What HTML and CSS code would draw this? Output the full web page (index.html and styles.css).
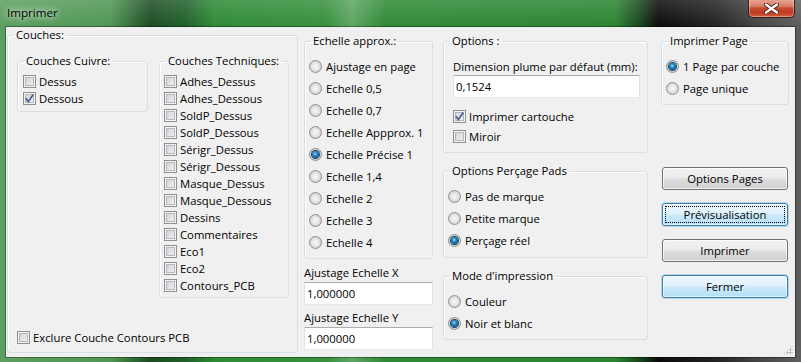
FILE: index.html
```html
<!DOCTYPE html>
<html>
<head>
    <title>Imprimer</title>
    <link rel="stylesheet" href="styles.css">
</head>
<body>
    <div class="window">
        <div class="titlebar">
            <span class="caption">Imprimer</span>
            <div class="close-btn">
                <svg width="15" height="11" viewBox="0 0 15 11">
                    <path d="M2 1.5 L13 9.5 M13 1.5 L2 9.5" stroke="#4a2018" stroke-width="4.2" stroke-linecap="round"/>
                    <path d="M2 1.5 L13 9.5 M13 1.5 L2 9.5" stroke="#ffffff" stroke-width="2.4" stroke-linecap="round"/>
                </svg>
            </div>
        </div>

        <div class="client">
            <!-- Couches -->
            <fieldset class="group couches">
                <legend>Couches:</legend>
                <div class="couches-body">
                    <div class="couches-row">
                        <fieldset class="group cuivre">
                            <legend>Couches Cuivre:</legend>
                            <div class="list">
                                <label class="check"><span class="box"></span>Dessus</label>
                                <label class="check"><span class="box on"><svg width="11" height="11" viewBox="0 0 11 11"><path d="M1.8 5.3 L4.3 8.6 L9.3 1.6" fill="none" stroke="#4a5f97" stroke-width="1.7"/></svg></span>Dessous</label>
                            </div>
                        </fieldset>
                        <fieldset class="group techniques">
                            <legend>Couches Techniques:</legend>
                            <div class="list">
                                <label class="check"><span class="box"></span>Adhes_Dessus</label>
                                <label class="check"><span class="box"></span>Adhes_Dessous</label>
                                <label class="check"><span class="box"></span>SoldP_Dessus</label>
                                <label class="check"><span class="box"></span>SoldP_Dessous</label>
                                <label class="check"><span class="box"></span>Sérigr_Dessus</label>
                                <label class="check"><span class="box"></span>Sérigr_Dessous</label>
                                <label class="check"><span class="box"></span>Masque_Dessus</label>
                                <label class="check"><span class="box"></span>Masque_Dessous</label>
                                <label class="check"><span class="box"></span>Dessins</label>
                                <label class="check"><span class="box"></span>Commentaires</label>
                                <label class="check"><span class="box"></span>Eco1</label>
                                <label class="check"><span class="box"></span>Eco2</label>
                                <label class="check"><span class="box"></span>Contours_PCB</label>
                            </div>
                        </fieldset>
                    </div>
                    <label class="check exclure"><span class="box"></span>Exclure Couche Contours PCB</label>
                </div>
            </fieldset>

            <!-- Echelle -->
            <div class="col col-echelle">
                <fieldset class="group echelle">
                    <legend>Echelle approx.:</legend>
                    <div class="radios">
                        <label class="radio-row"><span class="radio"></span>Ajustage en page</label>
                        <label class="radio-row"><span class="radio"></span>Echelle 0,5</label>
                        <label class="radio-row"><span class="radio"></span>Echelle 0,7</label>
                        <label class="radio-row"><span class="radio"></span>Echelle Appprox. 1</label>
                        <label class="radio-row"><span class="radio on"></span>Echelle Précise 1</label>
                        <label class="radio-row"><span class="radio"></span>Echelle 1,4</label>
                        <label class="radio-row"><span class="radio"></span>Echelle 2</label>
                        <label class="radio-row"><span class="radio"></span>Echelle 3</label>
                        <label class="radio-row"><span class="radio"></span>Echelle 4</label>
                    </div>
                </fieldset>
                <div class="field-label first">Ajustage Echelle X</div>
                <input class="textbox scale" type="text" value="1,000000">
                <div class="field-label">Ajustage Echelle Y</div>
                <input class="textbox scale" type="text" value="1,000000">
            </div>

            <!-- Options -->
            <div class="col col-options">
                <fieldset class="group options">
                    <legend>Options :</legend>
                    <div class="options-body">
                        <div class="field-label">Dimension plume par défaut (mm):</div>
                        <input class="textbox pen" type="text" value="0,1524">
                        <label class="check tall first"><span class="box on"><svg width="11" height="11" viewBox="0 0 11 11"><path d="M1.8 5.3 L4.3 8.6 L9.3 1.6" fill="none" stroke="#4a5f97" stroke-width="1.7"/></svg></span>Imprimer cartouche</label>
                        <label class="check tall"><span class="box"></span>Miroir</label>
                    </div>
                </fieldset>
                <fieldset class="group percage">
                    <legend>Options Perçage Pads</legend>
                    <div class="radios">
                        <label class="radio-row"><span class="radio"></span>Pas de marque</label>
                        <label class="radio-row"><span class="radio"></span>Petite marque</label>
                        <label class="radio-row"><span class="radio on"></span>Perçage réel</label>
                    </div>
                </fieldset>
                <fieldset class="group mode">
                    <legend>Mode d'impression</legend>
                    <div class="radios">
                        <label class="radio-row"><span class="radio"></span>Couleur</label>
                        <label class="radio-row"><span class="radio on"></span>Noir et blanc</label>
                    </div>
                </fieldset>
            </div>

            <!-- Page + boutons -->
            <div class="col col-page">
                <fieldset class="group page">
                    <legend>Imprimer Page</legend>
                    <div class="radios">
                        <label class="radio-row"><span class="radio on"></span>1 Page par couche</label>
                        <label class="radio-row"><span class="radio"></span>Page unique</label>
                    </div>
                </fieldset>
                <div class="buttons">
                    <button class="btn">Options Pages</button>
                    <button class="btn hot focus">Prévisualisation</button>
                    <button class="btn">Imprimer</button>
                    <button class="btn hot">Fermer</button>
                </div>
            </div>

            <div class="grip"></div>
        </div>
    </div>
</body>
</html>
```

FILE: styles.css
```css
* {
    box-sizing: border-box;
}

body {
    margin: 0;
    font-family: 'Open Sans', 'Noto Sans', sans-serif;
    font-size: 11.3px;
    color: #000;
}

/* Window frame (Aero glass) */
.window {
    width: 801px;
    height: 362px;
    display: flex;
    flex-direction: column;
    background:
        linear-gradient(180deg, rgba(255,255,255,0.15), rgba(255,255,255,0) 27px),
        linear-gradient(90deg, #5d9f60 0, #4f9653 110px, #1c4c22 150px, #20602a 185px, #2e8a35 215px, #36903c 325px, #5da462 352px, #2f8a35 385px, #2a8431 615px, #1a451d 640px, #0a0a0a 658px, #222 715px, #4a4a4a 765px, #5e5e5e 801px);
}

.titlebar {
    height: 27px;
    display: flex;
    align-items: flex-start;
}

.caption {
    margin: 5px 0 0 7px;
    line-height: 16px;
    font-size: 11.6px;
    text-shadow: 0 0 6px rgba(255,255,255,0.9), 0 0 10px rgba(255,255,255,0.7);
}

.close-btn {
    margin: -1px 6px 0 auto;
    width: 47px;
    height: 19px;
    border: 1px solid #3d1c16;
    border-top: none;
    border-radius: 0 0 5px 5px;
    background: linear-gradient(180deg, #e9a895 0%, #d98069 40%, #c74a30 50%, #bf3a20 75%, #d2603f 100%);
    box-shadow: inset 0 0 0 1px rgba(255,255,255,0.35);
    display: flex;
    align-items: center;
    justify-content: center;
}

.client {
    position: relative;
    margin-left: 6px;
    width: 789px;
    height: 330px;
    background: #f0f0f0;
    box-shadow: 0 0 0 1px rgba(0,0,0,0.35);
    display: flex;
    align-items: flex-start;
    padding: 1px 0 0 1px;
}

/* Group boxes */
.group {
    margin: 0;
    padding: 0;
    min-width: 0;
    border: 1px solid #d5dfe5;
    border-radius: 3px;
    box-shadow: inset 1px 1px 0 #fff;
}

.group legend {
    margin-left: 6px;
    padding: 0 2px;
    line-height: 14px;
}

.couches {
    width: 291px;
    height: 325px;
}

.couches-body {
    padding: 12px 0 0 9px;
}

.couches-row {
    display: flex;
    align-items: flex-start;
}

.cuivre {
    width: 131px;
    height: 58px;
}

.techniques {
    margin-left: 11px;
    width: 130px;
    height: 244px;
}

.cuivre .list {
    padding: 5px 0 0 5px;
}

.techniques .list {
    padding: 5px 0 0 4px;
}

.exclure {
    margin-top: 31px;
}

/* Check boxes */
.check {
    display: flex;
    align-items: center;
    height: 17px;
    white-space: nowrap;
}

.check.tall {
    height: 20px;
}

.check.tall.first {
    margin-top: 8px;
}

.box {
    flex: none;
    width: 13px;
    height: 13px;
    margin-right: 3px;
    border: 1px solid #8e8f8f;
    background: linear-gradient(135deg, #cdd1d6, #f3f4f5);
    box-shadow: inset 0 0 0 1px #f4f4f4, inset 0 0 0 2px #b3b7bc;
    display: flex;
    align-items: center;
    justify-content: center;
}

.box svg {
    display: block;
}

/* Radio buttons */
.radios {
    padding: 7px 0 0 4px;
}

.radio-row {
    display: flex;
    align-items: center;
    height: 22px;
    white-space: nowrap;
}

.radio {
    flex: none;
    width: 13px;
    height: 13px;
    margin-right: 4px;
    border-radius: 50%;
    border: 1px solid #8e8f8f;
    background: radial-gradient(circle at 50% 50%, #f7f7f7 0, #ebebeb 35%, #c4c6c9 90%);
    display: flex;
    align-items: center;
    justify-content: center;
}

.radio.on::after {
    content: '';
    width: 7px;
    height: 7px;
    border-radius: 50%;
    background: radial-gradient(circle at 45% 40%, #8fd8f7 0, #1e7fc0 40%, #0b3c68 90%);
    box-shadow: 0 0 0 1px #1c3f5f;
}

/* Columns */
.col {
    display: flex;
    flex-direction: column;
    margin-top: 6px;
}

.col-echelle {
    margin-left: 6px;
    width: 129px;
}

.echelle {
    height: 225px;
}

.field-label {
    line-height: 16px;
    margin-top: 5px;
    white-space: nowrap;
}

.field-label.first {
    margin-top: 6px;
}

.textbox {
    display: block;
    margin: 1px 0 0;
    height: 23px;
    padding: 0 2px;
    font-family: inherit;
    font-size: inherit;
    color: #000;
    background: #fff;
    border: 1px solid #e2e3ea;
    border-top-color: #abadb3;
    border-bottom-color: #e3e9ef;
    outline: none;
}

.scale {
    width: 129px;
}

.col-options {
    margin-left: 10px;
    width: 205px;
}

.options {
    height: 119px;
}

.options-body {
    padding: 11px 0 0 9px;
}

.options-body .field-label {
    margin-top: 0;
}

.pen {
    margin-top: 0;
    width: 187px;
}

.percage {
    margin-top: 11px;
    height: 94px;
}

.mode {
    margin-top: 11px;
    height: 71px;
}

.col-page {
    margin-left: 13px;
    width: 128px;
}

.page {
    height: 71px;
}

.buttons {
    display: flex;
    flex-direction: column;
    gap: 13px;
    margin: 62px 0 0 1px;
}

/* Push buttons */
.btn {
    width: 126px;
    height: 23px;
    padding: 0;
    font-family: inherit;
    font-size: inherit;
    color: #000;
    border: 1px solid #707070;
    border-radius: 3px;
    background: linear-gradient(180deg, #f2f2f2 0%, #ebebeb 48%, #dddddd 52%, #cfcfcf 100%);
    box-shadow: inset 0 0 0 1px rgba(255,255,255,0.75);
}

.btn.hot {
    border-color: #3c7fb1;
    background: linear-gradient(180deg, #eef7fd 0%, #e0f2fc 48%, #cbeafb 52%, #b6dff5 100%);
    box-shadow: inset 0 0 0 1px rgba(255,255,255,0.6), 0 0 0 1px rgba(60,170,230,0.35);
}

.btn.focus {
    outline: 1px dotted #000;
    outline-offset: -4px;
}

/* Size grip */
.grip {
    position: absolute;
    right: 2px;
    bottom: 2px;
    width: 10px;
    height: 10px;
    background: radial-gradient(circle, #a0a0a0 0.8px, transparent 1.2px) 0 0 / 3px 3px;
    clip-path: polygon(100% 0, 100% 100%, 0 100%);
}
```
